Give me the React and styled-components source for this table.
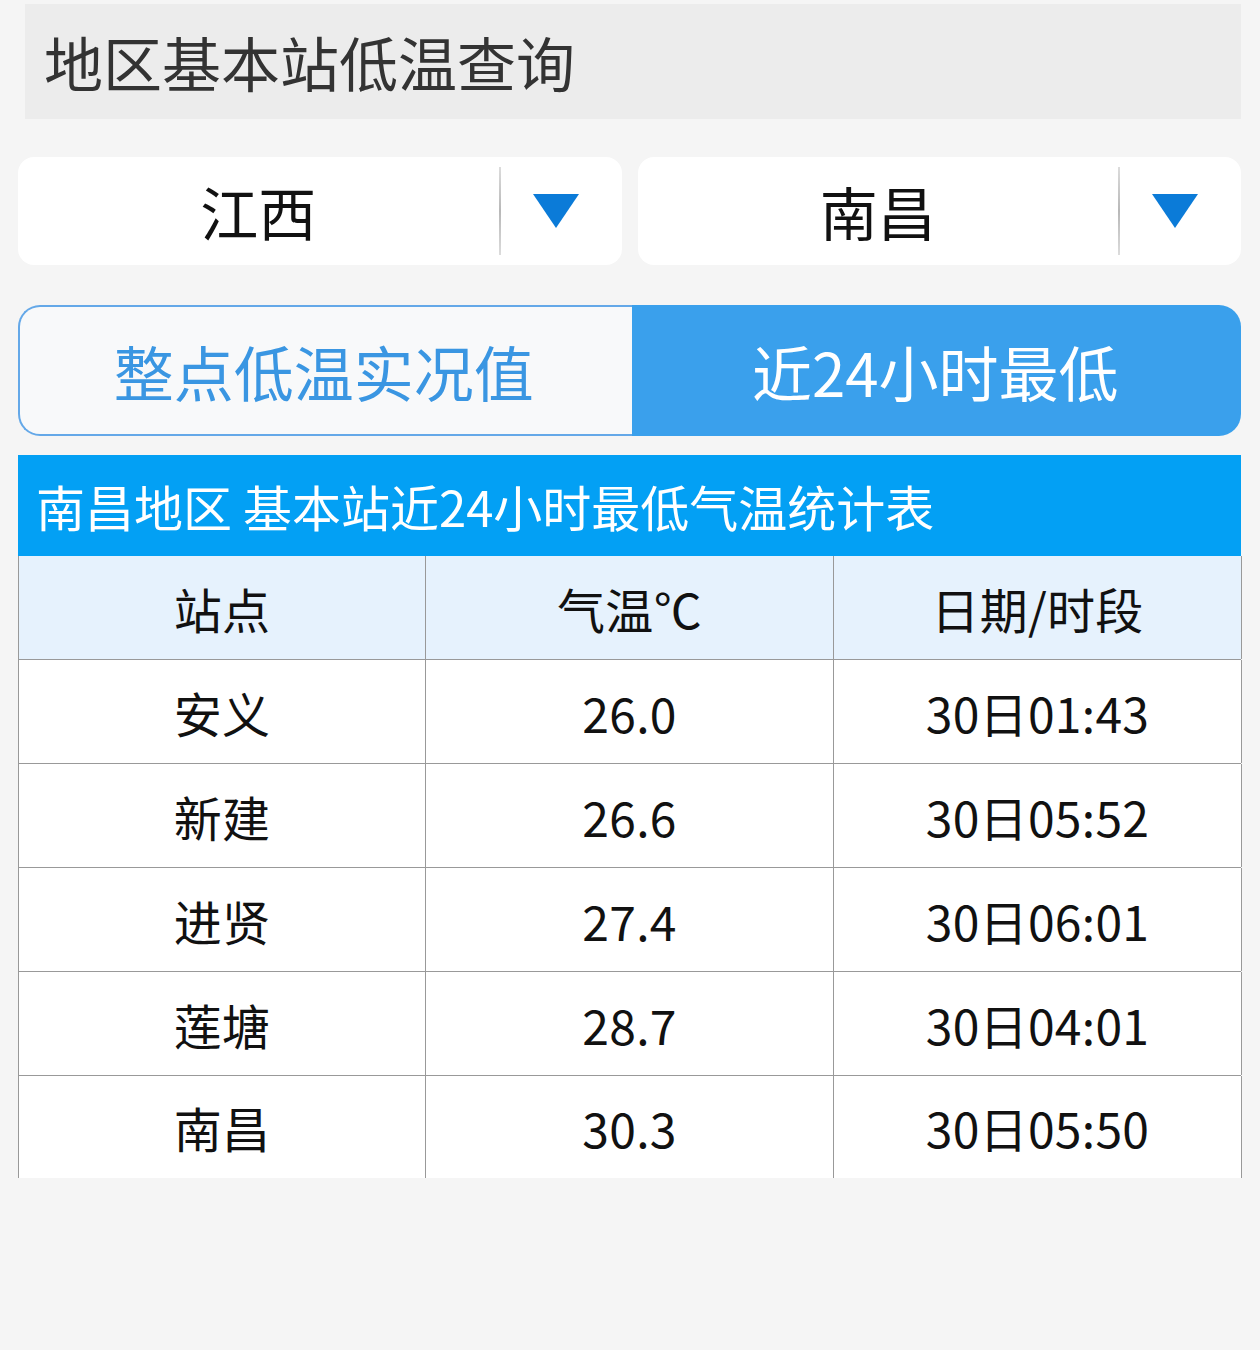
import React, { useState } from "react";
import styled, { createGlobalStyle } from "styled-components";

const GlobalStyle = createGlobalStyle`
    html, body {
        margin: 0;
        padding: 0;
        background: #f5f5f5;
    }
    body {
        font-family: "Noto Sans CJK SC", "Noto Sans", sans-serif;
    }
`;

// styles
const Page = styled.div`
    width: 1260px;
    min-height: 1350px;
    box-sizing: border-box;
    padding: 4px 19px 0 18px;
    background: #f5f5f5;
`;

const TitleBox = styled.div`
    margin-left: 7px;
    height: 115px;
    background: #ececec;
    display: flex;
    align-items: center;
    padding-left: 19px;
    font-size: 59px;
    color: #333;
    line-height: 1;
`;

const SelectRow = styled.div`
    margin-top: 38px;
    display: flex;
    gap: 16px;
`;

const Select = styled.div`
    flex: 1;
    height: 108px;
    background: #fff;
    border-radius: 16px;
    display: flex;
    align-items: stretch;
`;

const SelectLabel = styled.div`
    flex: 1;
    display: flex;
    align-items: center;
    justify-content: center;
    font-size: 58px;
    color: #111;
`;

const Divider = styled.div`
    width: 2px;
    margin: 10px 0;
    background: linear-gradient(#dcdcdc, #b8b8b8, #dcdcdc);
`;

const ArrowBox = styled.div`
    width: 110px;
    margin-right: 11px;
    display: flex;
    align-items: center;
    justify-content: center;
`;

const Tabs = styled.div`
    margin-top: 40px;
    height: 131px;
    display: flex;
`;

const Tab = styled.div`
    flex: 1;
    box-sizing: border-box;
    display: flex;
    align-items: center;
    justify-content: center;
    font-size: 60px;
    line-height: 1;
    border: 2px solid ${(p) => (p.active ? "#3aa0ec" : "#64a8e8")};
    color: ${(p) => (p.active ? "#fff" : "#3a96e2")};
    background: ${(p) => (p.active ? "#3aa0ec" : "#f8f9fa")};
    border-radius: ${(p) => (p.side === "left" ? "22px 0 0 22px" : "0 22px 22px 0")};
    ${(p) => (p.side === "left" ? "border-right: none;" : "border-left: none;")}
    padding-right: ${(p) => (p.side === "left" ? "4px" : "0")};
`;

const Table = styled.div`
    margin-top: 19px;
`;

const Caption = styled.div`
    height: 101px;
    background: #03a0f4;
    color: #fff;
    display: flex;
    align-items: center;
    padding-left: 18px;
    font-size: 49px;
    line-height: 1;
`;

const Row = styled.div`
    display: grid;
    grid-template-columns: 407px 408px 408px;
    height: ${(p) => (p.last ? "102px" : "104px")};
    box-sizing: border-box;
    background: ${(p) => (p.head ? "#e6f2fd" : "#fff")};
    border-left: 1px solid #999;
    border-bottom: ${(p) => (p.last ? "none" : "1px solid #999")};
`;

const Cell = styled.div`
    display: flex;
    align-items: center;
    justify-content: center;
    border-right: 1px solid #999;
    font-size: 48px;
    color: #111;
    line-height: 1;
    letter-spacing: 0.3px;
`;

function Arrow() {
    return (
        <svg width="48" height="36" viewBox="0 0 48 36">
            <polygon points="1,1 47,1 24,35" fill="#0b7bd8" />
        </svg>
    );
}

const rows = [
    ["安义", "26.0", "30日01:43"],
    ["新建", "26.6", "30日05:52"],
    ["进贤", "27.4", "30日06:01"],
    ["莲塘", "28.7", "30日04:01"],
    ["南昌", "30.3", "30日05:50"],
];

export default function App() {
    const [tab, setTab] = useState(1);

    return (
        <Page>
            <GlobalStyle />
            <TitleBox>地区基本站低温查询</TitleBox>
            <SelectRow>
                <Select>
                    <SelectLabel>江西</SelectLabel>
                    <Divider />
                    <ArrowBox>
                        <Arrow />
                    </ArrowBox>
                </Select>
                <Select>
                    <SelectLabel>南昌</SelectLabel>
                    <Divider />
                    <ArrowBox>
                        <Arrow />
                    </ArrowBox>
                </Select>
            </SelectRow>
            <Tabs>
                <Tab side="left" active={tab === 0} onClick={() => setTab(0)}>
                    整点低温实况值
                </Tab>
                <Tab side="right" active={tab === 1} onClick={() => setTab(1)}>
                    近24小时最低
                </Tab>
            </Tabs>
            <Table>
                <Caption>南昌地区 基本站近24小时最低气温统计表</Caption>
                <Row head>
                    <Cell>站点</Cell>
                    <Cell>气温℃</Cell>
                    <Cell>日期/时段</Cell>
                </Row>
                {rows.map((r, i) => (
                    <Row key={i} last={i === rows.length - 1}>
                        {r.map((c, j) => (
                            <Cell key={j}>{c}</Cell>
                        ))}
                    </Row>
                ))}
            </Table>
        </Page>
    );
}
